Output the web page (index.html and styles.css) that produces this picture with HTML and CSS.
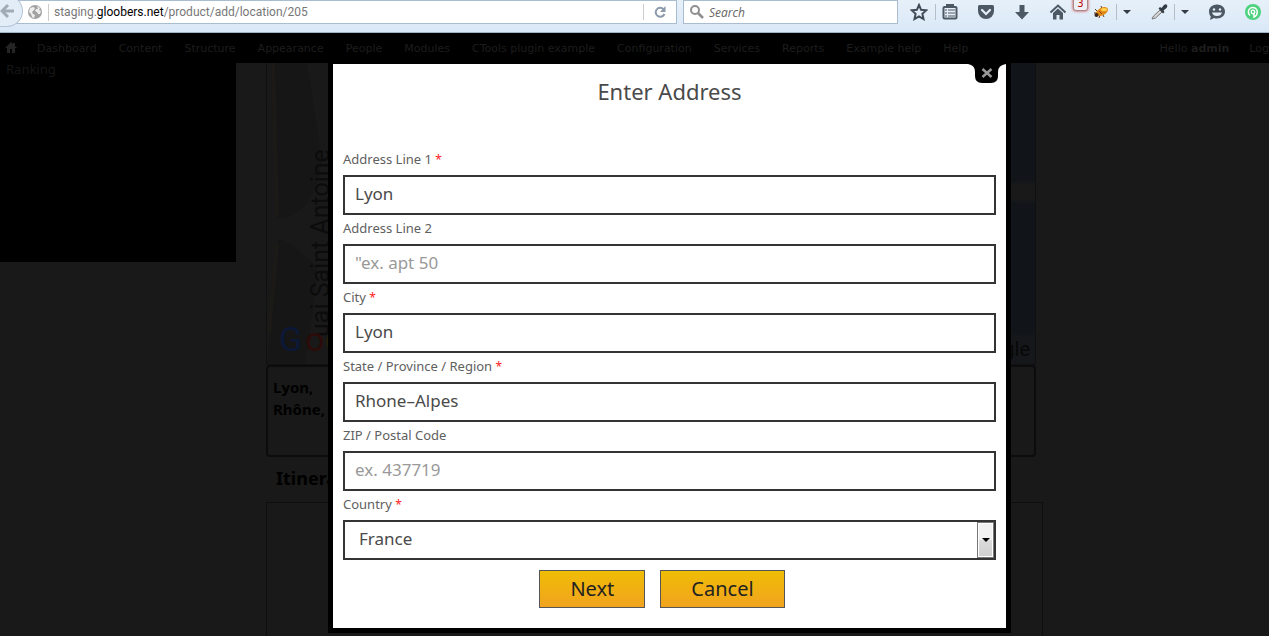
FILE: index.html
```html
<!DOCTYPE html>
<html lang="en">
<head>
<meta charset="utf-8">
<title>Enter Address</title>
<link rel="stylesheet" href="styles.css">
</head>
<body>
<header class="chrome">
  <div class="urlbar">
    <button class="back" aria-label="Back"><svg width="15" height="16" viewBox="0 0 15 16"><path d="M8 2L2 8l6 6M2.500 8H14" fill="none" stroke="#a1abb6" stroke-width="3"/></svg></button>
    <svg class="globe" width="14" height="14" viewBox="0 0 14 14"><circle cx="7" cy="7" r="7" fill="#a2a2a2"/><path d="M2 3l3-1 2 1-1 2-2 2 1 2 2 1-1 3-2-1-1-3-2-2zM9 1l3 2-1 2 2 1-1 3-2 0-1-2-2-1 1-2 2 0z" fill="#eee"/></svg>
    <div class="url" role="textbox" contenteditable="true" aria-label="Address"><span class="dim">staging.</span>gloobers.net<span class="dim">/product/add/location/205</span></div>
    <button class="reload" aria-label="Reload"><svg width="12" height="12" viewBox="0 0 12 12"><path d="M9.500 3.200A4.500 4.500 0 1 0 10.400 8" fill="none" stroke="#8b99ab" stroke-width="2"/><path d="M11.500 0v6H6z" fill="#8b99ab"/></svg></button>
  </div>
  <div class="search">
    <svg width="14" height="14" viewBox="0 0 14 14"><circle cx="5" cy="5" r="4" fill="none" stroke="#8f8f8f" stroke-width="2"/><path d="M8 8l5 5" stroke="#8f8f8f" stroke-width="2.600"/></svg>
    <input type="text" placeholder="Search" aria-label="Search">
  </div>
  <div class="tools">
    <button class="tool star" aria-label="Bookmark"><svg viewBox="0 0 18 18"><path d="M9 2l2.100 4.800 5.200.5-3.900 3.500 1.100 5.200L9 13.300 4.500 16l1.100-5.200-3.900-3.500 5.200-.5z" fill="none" stroke="#414b57" stroke-width="2"/></svg></button>
    <i class="sep"></i>
    <button class="tool list" aria-label="Bookmarks list"><svg viewBox="0 0 18 18"><path d="M6 4V2h6v2" fill="none" stroke="#4d5865" stroke-width="2"/><rect x="2.500" y="4" width="13" height="11.500" rx="1" fill="#e6eff8" stroke="#4d5865" stroke-width="2"/><path d="M4 7h2M4 10h2M4 13h2M7 7h7M7 10h7M7 13h7" stroke="#4d5865" stroke-width="1.200"/></svg></button>
    <button class="tool" aria-label="Pocket"><svg viewBox="0 0 18 18"><path d="M1 3.500Q1 2 2.500 2h13Q17 2 17 3.500V8a8 8 0 0 1-16 0z" fill="#4d5865"/><path d="M5 7l4 4 4-4" fill="none" stroke="#e6eff8" stroke-width="2.200" stroke-linecap="round"/></svg></button>
    <button class="tool" aria-label="Downloads"><svg viewBox="0 0 18 18"><path d="M6.500 2h5v7H16l-7 7.500L2 9h4.500z" fill="#4d5865"/></svg></button>
    <button class="tool" aria-label="Home"><svg viewBox="0 0 18 18"><path d="M1.500 9.500L9 2.500l7.500 7" fill="none" stroke="#4d5865" stroke-width="2"/><path d="M4 10l5-4.500L14 10v6.500h-3.500V12h-3v4.500H4z" fill="#4d5865"/></svg></button>
    <button class="tool bug" aria-label="Firebug, 3 errors"><svg viewBox="0 0 18 18"><path d="M3 6l3 3M9 3l1 3M12 14l-1-2M7 15l1-3M2 10l3 0" stroke="#65391b"/><ellipse cx="10" cy="8.500" rx="6.500" ry="3.800" transform="rotate(-28 10 8.500)" fill="#e28a17"/><ellipse cx="12" cy="6.500" rx="3" ry="1.600" fill="#ffd550"/><path d="M7 8l3 3" stroke="#a83b0b"/><circle cx="4.500" cy="12" r="2" fill="#3b2618"/></svg><span class="badge">3</span></button>
    <i class="sep after"></i>
    <button class="caret" aria-label="Firebug menu"></button>
    <button class="tool" aria-label="Color picker"><svg viewBox="0 0 18 18"><path d="M2 16l1.500-3L10 7l2 2-6.500 6z" fill="#d5d5d5" stroke="#777"/><path d="M8.500 5.500L10 4l1.500 1 2.500-3q2-1.500 3 0 1 1.500-.5 3l-3 2.500 1 1.500-1.500 1.500z" fill="#333b45"/></svg></button>
    <i class="sep after"></i>
    <button class="caret" aria-label="Color picker menu"></button>
    <button class="tool" aria-label="Chat"><svg viewBox="0 0 18 18"><path d="M9 1.500c4.600 0 8 3 8 7s-3.400 7-8 7c-1 0-2 0-3-.5L2 17l.8-3.500C1.600 12.200 1 10.500 1 8.500c0-4 3.400-7 8-7z" fill="#4d5865"/><circle cx="6" cy="6.500" r="1.200" fill="#e6eff8"/><circle cx="12" cy="6.500" r="1.200" fill="#e6eff8"/><path d="M4 9.500h10q-1 3.500-5 3.500t-5-3.500z" fill="#e6eff8"/></svg></button>
    <button class="tool" aria-label="Add-on"><svg viewBox="0 0 18 18"><circle cx="9" cy="9" r="8" fill="#4dd27e"/><path d="M6 12.500A4.500 4.500 0 1 1 13.300 9q0 3.500-3.300 5V9.500" fill="none" stroke="#fff" stroke-width="1.500"/><circle cx="9" cy="9" r="1.800" fill="none" stroke="#fff" stroke-width="1.300"/></svg></button>
  </div>
</header>

<div class="page">
  <nav class="admin">
    <a href="#" class="house" aria-label="Home"><svg width="12" height="11" viewBox="0 0 12 11"><path d="M6 0l2 2V1h2v3l2 2h-2v5H7V7H5v4H2V6H0z" fill="#242424"/></svg></a>
    <a href="#">Dashboard</a><a href="#">Content</a><a href="#">Structure</a><a href="#">Appearance</a><a href="#">People</a><a href="#">Modules</a><a href="#">CTools plugin example</a><a href="#">Configuration</a><a href="#">Services</a><a href="#">Reports</a><a href="#">Example help</a><a href="#">Help</a>
    <a href="#" class="hello">Hello <b>admin</b></a><a href="#">Log</a>
  </nav>
  <div class="columns">
    <aside class="side">Ranking</aside>
    <main class="main">
      <div class="map">
        <svg class="map-left" width="64" height="301" viewBox="0 0 64 301">
          <path d="M6 0h34q8 50 14 90 2 30-18 55-14 12-26 10-4-70-4-155zM12 175q18 8 38 30l-4 45-8 50H0l4-40 6-80z" fill="#161616"/>
          <path d="M6 0l4 152M10 180L2 270" stroke="#1b1a16" stroke-width="4"/>
          <text transform="translate(62 274) rotate(-90)" font-size="25" fill="#0c0c0c">uai Saint Antoine</text>
          <g font-size="34"><text x="12" y="288" fill="#0b1838">G</text><text x="38" y="288" fill="#2c0b09">o</text><text x="58" y="288" fill="#29210a">o</text></g>
        </svg>
        <div class="water"><span>gle</span></div>
      </div>
      <div class="place">Lyon,<br>Rhône,</div>
      <h2 class="title">Itinerary</h2>
      <div class="itinerary"></div>
    </main>
  </div>

  <form class="modal" role="dialog" aria-labelledby="heading">
    <button type="button" class="close" aria-label="Close"><svg width="38" height="19" viewBox="0 0 38 19"><path d="M0 0q7 1 7 8v4q0 7 7 7h9q7 0 7-7V8q0-7 8-8z" fill="#000"/><path d="M14.500 5l9 8M23.500 5l-9 8" stroke="#999" stroke-width="2.400"/></svg></button>
    <h1 id="heading">Enter Address</h1>
    <div class="fields">
      <label for="a1">Address Line 1 <em>*</em></label>
      <input id="a1" type="text" value="Lyon">
      <label for="a2">Address Line 2</label>
      <input id="a2" type="text" placeholder="&quot;ex. apt 50">
      <label for="city">City <em>*</em></label>
      <input id="city" type="text" value="Lyon">
      <label for="state">State / Province / Region <em>*</em></label>
      <input id="state" type="text" value="Rhone–Alpes">
      <label for="zip">ZIP / Postal Code</label>
      <input id="zip" type="text" placeholder="ex. 437719">
      <label for="country">Country <em>*</em></label>
      <div class="select"><select id="country"><option>France</option></select><span class="drop"></span></div>
    </div>
    <div class="actions"><button type="button">Next</button><button type="button">Cancel</button></div>
  </form>
</div>
</body>
</html>
```
FILE: styles.css
```css
*, *::before { box-sizing: border-box; }
body {
  margin: 0;
  height: 100vh;
  display: flex;
  flex-direction: column;
  overflow: hidden;
  background: #191919;
  font-family: "Noto Sans", "Open Sans", sans-serif;
}
button { padding: 0; border: 0; background: none; font-family: inherit; }
.chrome {
  flex: none;
  display: flex;
  align-items: flex-start;
  height: 33px;
  background: linear-gradient(#e7f0f9, #d9e8f7);
  border-bottom: 1px solid #9fb3cb;
}
.urlbar, .search {
  display: flex;
  align-items: center;
  height: 24px;
  background: #fff;
  border: 1px solid #aabccf;
}
.urlbar { flex: 1; min-width: 0; border-left: 0; }
.back {
  flex: none;
  width: 23px;
  height: 32px;
  padding-right: 7px;
  margin-top: -2px;
  background: #e3edf8;
  border: 1px solid #b5c5d7;
  border-left: 0;
  border-radius: 0 16px 16px 0;
}
.back svg { display: block; }
.globe { flex: none; margin-left: 5px; }
.url {
  flex: 1;
  min-width: 0;
  margin-left: 6px;
  padding-left: 5px;
  border-left: 1px solid #ccc;
  font-family: Roboto, sans-serif;
  font-size: 12px;
  line-height: 17px;
  white-space: nowrap;
  overflow: hidden;
}
.dim { color: #777; }
.reload { width: 33px; height: 16px; border-left: 1px solid #ccc; }
.reload svg { display: block; margin: auto; }
.search { width: 215px; margin-left: 6px; padding-left: 6px; }
.search input {
  flex: 1;
  min-width: 0;
  padding: 0 0 0 5px;
  border: 0;
  background: none;
  font: italic 12px "Open Sans", sans-serif;
}
.search input::placeholder { color: #666; }
.tools { display: flex; align-items: center; height: 24px; margin-right: 7px; }
.tool { position: relative; width: 18px; height: 18px; margin-left: 18px; }
.tool svg { display: block; width: 18px; height: 18px; }
.star { margin-left: 12px; }
.list { margin-left: 5px; }
.bug { margin-left: 25px; }
.sep { width: 1px; height: 16px; margin-left: 7px; background: #b4bec9; }
.sep.after { margin-left: 6px; }
.caret { width: 10px; height: 10px; margin-left: 5px; }
.caret::before {
  content: "";
  display: block;
  margin: auto;
  width: 8px;
  border: 4px solid transparent;
  border-top-color: #333b45;
  border-bottom: 0;
}
.badge {
  position: absolute;
  left: -19px;
  top: -7px;
  width: 15px;
  height: 15px;
  border: 1px solid #a88;
  border-radius: 3px;
  background: #eef0f6;
  box-shadow: 0 0 3px #c33;
  color: #b00;
  font: 10px/13px "DejaVu Sans", sans-serif;
}
.page { position: relative; flex: 1; min-height: 0; }
.admin {
  display: flex;
  align-items: center;
  gap: 22px;
  height: 30px;
  padding: 2px 0 0 5px;
  overflow: hidden;
  background: #000;
  font: 11px/14px "DejaVu Sans", sans-serif;
}
.admin a { flex: none; color: #1d1d1d; text-decoration: none; white-space: nowrap; }
.admin .house { width: 10px; }
.admin .hello { margin-left: auto; }
.admin .hello + a { margin-left: -2px; }
.columns { display: flex; align-items: flex-start; gap: 30px; }
.side {
  width: 236px;
  height: 199px;
  padding-left: 6px;
  background: #000;
  color: #161616;
  font-size: 13px;
  line-height: 12px;
}
.main { flex: 1; margin-right: 226px; color: #000; }
.map {
  display: flex;
  justify-content: space-between;
  height: 302px;
  margin-right: 7px;
  border: 1px solid #101010;
  border-top: 0;
  font-family: Roboto, sans-serif;
}
.water {
  width: 30px;
  display: flex;
  align-items: flex-end;
  justify-content: flex-end;
  padding-right: 5px;
  padding-bottom: 3px;
  background: linear-gradient(#11151a 118px, #191919 122px, #191919 136px, #11151a 140px, #11151a 270px, #15171a 274px);
  color: #080808;
  font-size: 20px;
}
.place {
  height: 92px;
  margin-right: 7px;
  padding: 9px 5px;
  border: 2px solid #0c0c0c;
  border-radius: 4px;
  font-size: 15px;
  font-weight: bold;
  line-height: 22px;
}
.title { margin: 8px 10px 10px; font-size: 18px; line-height: 27px; }
.itinerary { height: 140px; border: 1px solid #0e0e0e; }
.modal {
  position: absolute;
  top: 26px;
  left: 328px;
  right: 258px;
  padding: 0 10px 20px;
  border: 5px solid #000;
  background: #fff;
  color: #4a4a4a;
}
.close { position: absolute; top: 0; right: 0; }
.close svg { display: block; }
.modal h1 {
  margin: 0 0 40px;
  padding-top: 12px;
  text-align: center;
  font-size: 22px;
  font-weight: normal;
  line-height: 30px;
}
.fields { display: flex; flex-direction: column; }
.fields label { height: 29px; font-size: 13px; line-height: 26px; color: #606060; }
.fields em { color: #f22; font-style: normal; font-size: 12px; }
.fields input, .fields select {
  width: 100%;
  height: 40px;
  padding: 0 10px 4px;
  border: 2px solid #333436;
  border-radius: 0;
  background: #fff;
  color: #4a4a4a;
  font: 17px "Noto Sans", sans-serif;
}
.fields input::placeholder { color: #999; }
.fields select { padding-left: 14px; appearance: none; display: block; }
.select { position: relative; }
.drop {
  position: absolute;
  top: 2px;
  right: 2px;
  bottom: 2px;
  width: 17px;
  display: flex;
  align-items: center;
  justify-content: center;
  border: 1px solid #777;
  box-shadow: inset 0 0 0 1px #fff;
  background: linear-gradient(#f2f2f2 50%, #dcdcdc 50%, #cfcfcf);
  pointer-events: none;
}
.drop::before { content: ""; border: 4px solid transparent; border-top-color: #000; border-bottom: 0; }
.actions { display: flex; justify-content: center; margin-top: 10px; }
.actions button {
  height: 38px;
  margin-right: 15px;
  padding: 0 30px 2px;
  border: 1px solid #555;
  background: linear-gradient(#efbd05, #f2a31f);
  color: #222;
  font-size: 20px;
}
```
